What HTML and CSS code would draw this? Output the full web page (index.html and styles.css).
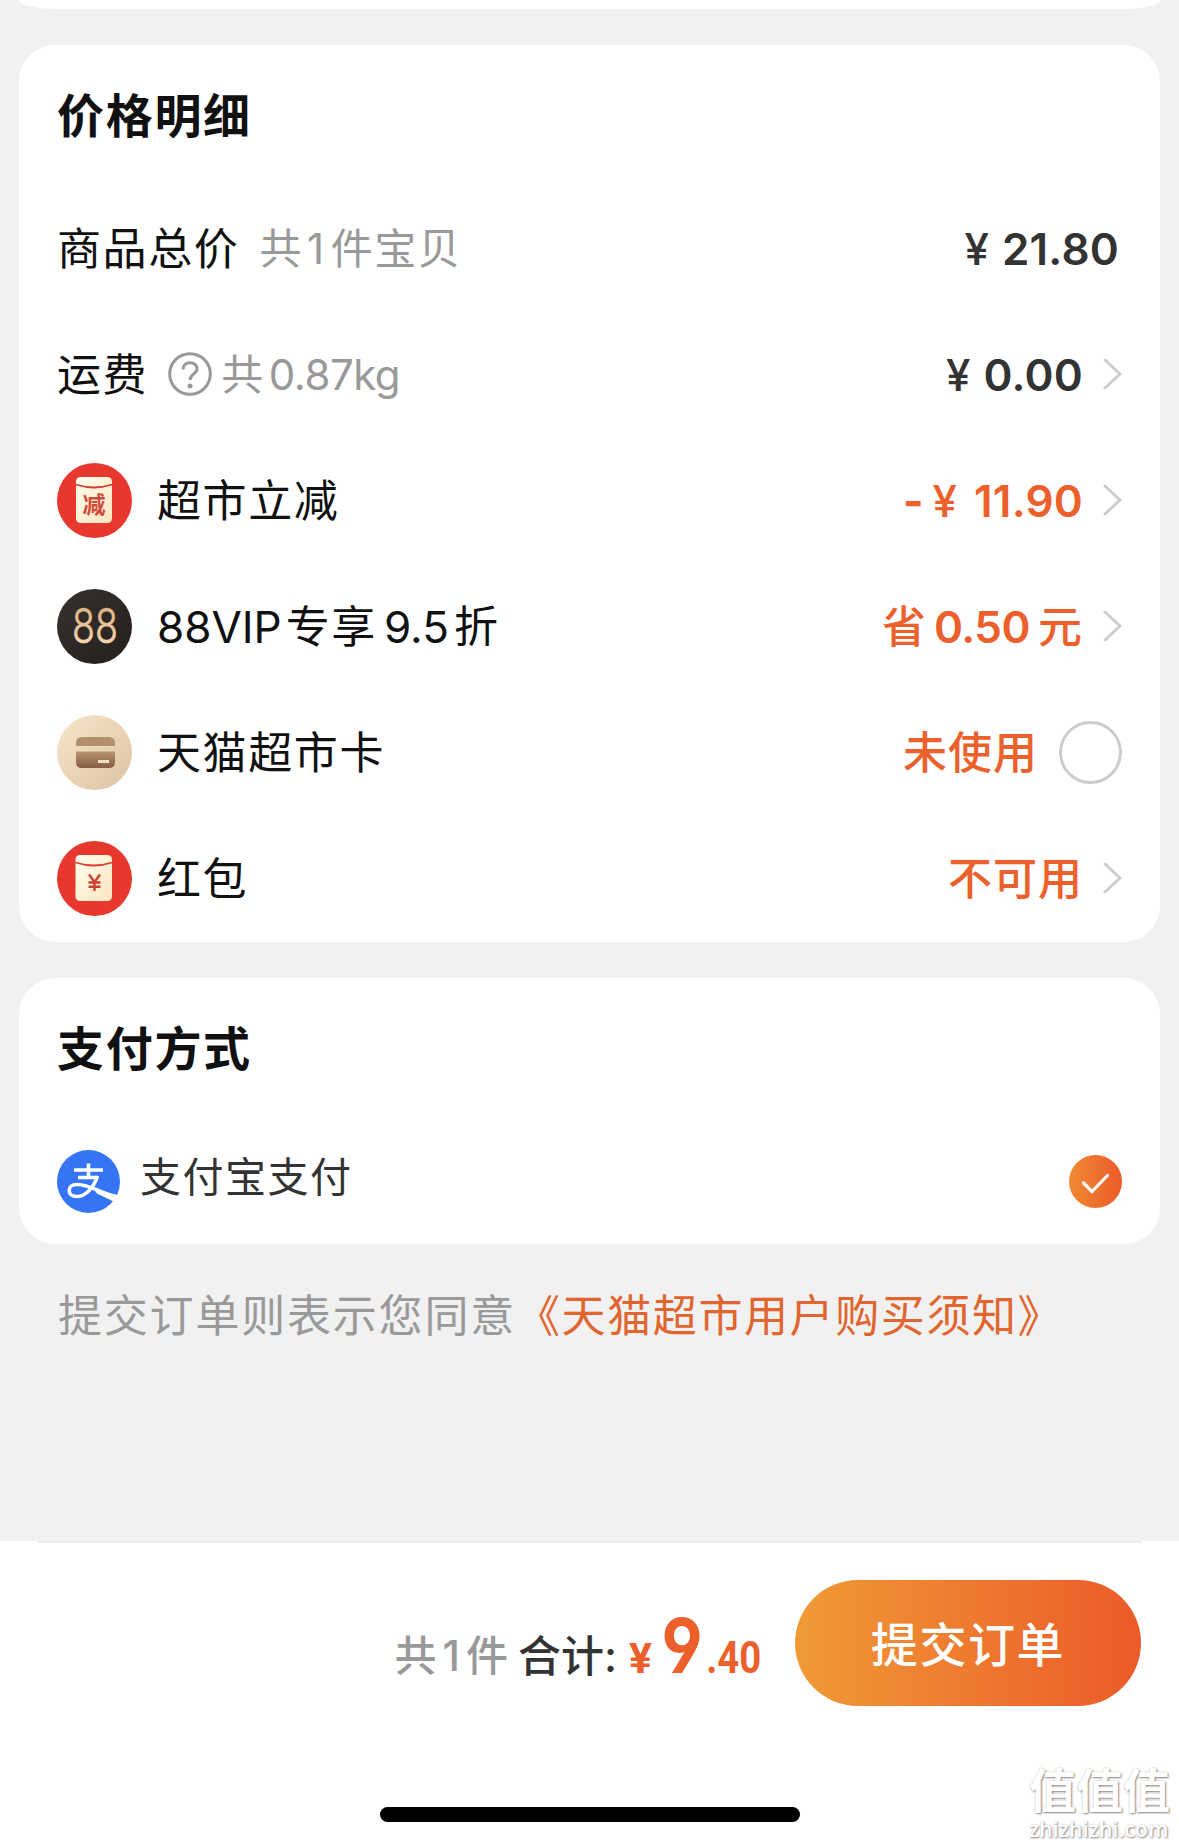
FILE: index.html
```html
<!DOCTYPE html>
<html lang="zh-CN">
<head>
<meta charset="utf-8">
<title>确认订单</title>
<link rel="stylesheet" href="styles.css">
</head>
<body>
<svg class="defs" width="0" height="0" aria-hidden="true">
  <defs>
    <linearGradient id="cream" x1="0" y1="0" x2="1" y2="1"><stop offset="0" stop-color="#fffdf0"/><stop offset="1" stop-color="#fbe6bd"/></linearGradient>
    <linearGradient id="sand" x1="0" y1="0" x2="1" y2="1"><stop offset="0" stop-color="#f9e6cb"/><stop offset="1" stop-color="#dcc3a1"/></linearGradient>
    <linearGradient id="brown" x1="0" y1="0" x2="0" y2="1"><stop offset="0" stop-color="#b9946f"/><stop offset="1" stop-color="#855c43"/></linearGradient>
    <linearGradient id="gold" x1="0" y1="0" x2="0" y2="1"><stop offset="0" stop-color="#d9a877"/><stop offset="1" stop-color="#f8dfb8"/></linearGradient>
    <linearGradient id="ink" x1="0" y1="0" x2="1" y2="1"><stop offset="0" stop-color="#37322f"/><stop offset="1" stop-color="#241f1c"/></linearGradient>
    <linearGradient id="orange" x1="0" y1="0" x2="1" y2="0"><stop offset="0" stop-color="#ef8a32"/><stop offset="1" stop-color="#ec5a29"/></linearGradient>
  </defs>
</svg>
<div class="page">
  <section class="card card-prev"></section>

  <section class="card card-price">
    <h2 class="title">价格明细</h2>
    <div class="row">
      <span class="label">商品总价</span><span class="note note-count">共<span class="one">1</span>件宝贝</span>
      <span class="value value-flat"><span class="yen">¥</span><span class="digits">21.80</span></span>
    </div>
    <div class="row">
      <span class="label">运费</span>
      <svg class="help" viewBox="0 0 44 44"><circle cx="22" cy="22" r="20.3"/><path d="M15 17.500C15 8.500 29 8.500 29 17C29 22 22 22 22 28"/><circle class="dot" cx="22" cy="34" r="2.500"/></svg>
      <span class="note note-weight">共<span class="kg">0.87kg</span></span>
      <span class="value"><span class="yen">¥</span><span class="digits">0.00</span></span>
      <svg class="chevron" viewBox="0 0 19 32"><path d="M2 2L17 16L2 30"/></svg>
    </div>
    <div class="row">
      <svg class="icon" viewBox="0 0 75 75"><circle cx="37.500" cy="37.500" r="37.500" fill="#e8382d"/><rect x="19" y="14" width="36" height="46" rx="4.500" fill="url(#cream)"/><path d="M19 21.500Q37 27.500 55 21.500" fill="none" stroke="#d93b2e" stroke-width="1.800"/><text class="icon-char" x="37" y="49.500">减</text></svg>
      <span class="label">超市立减</span>
      <span class="value accent"><span class="minus">-</span><span class="yen yen-off">¥</span><span class="digits">11.90</span></span>
      <svg class="chevron" viewBox="0 0 19 32"><path d="M2 2L17 16L2 30"/></svg>
    </div>
    <div class="row">
      <svg class="icon" viewBox="0 0 75 75"><circle cx="37.500" cy="37.500" r="37.500" fill="url(#ink)"/><text class="icon-vip" x="15" y="54" textLength="46" lengthAdjust="spacingAndGlyphs">88</text></svg>
      <span class="label"><span class="lat">88VIP</span>专享<span class="lat lat-mid">9.5</span>折</span>
      <span class="value accent">省<span class="digits amount">0.50</span>元</span>
      <svg class="chevron" viewBox="0 0 19 32"><path d="M2 2L17 16L2 30"/></svg>
    </div>
    <div class="row">
      <svg class="icon" viewBox="0 0 75 75"><circle cx="37.500" cy="37.500" r="37.500" fill="url(#sand)"/><path d="M19 31V28Q19 22 25 22H52Q58 22 58 28V31Z" fill="#b3906d"/><path d="M19 36.500H58V47Q58 53 52 53H25Q19 53 19 47Z" fill="url(#brown)"/><rect x="41" y="45" width="11" height="3" fill="#f3dfc2"/></svg>
      <span class="label">天猫超市卡</span>
      <span class="value value-radio accent">未使用</span>
      <span class="radio"></span>
    </div>
    <div class="row">
      <svg class="icon" viewBox="0 0 75 75"><circle cx="37.500" cy="37.500" r="37.500" fill="#e8382d"/><rect x="18.500" y="14" width="36.500" height="46" rx="4.500" fill="url(#cream)"/><path d="M18.500 21.500Q37 27.500 55 21.500" fill="none" stroke="#d93b2e" stroke-width="1.800"/><path d="M32 33.500L37.500 41L43 33.500M37.500 41V50M31.500 41.500H43.500M31.500 45.800H43.500" fill="none" stroke="#cf3f30" stroke-width="2.400"/></svg>
      <span class="label">红包</span>
      <span class="value accent">不可用</span>
      <svg class="chevron" viewBox="0 0 19 32"><path d="M2 2L17 16L2 30"/></svg>
    </div>
  </section>

  <section class="card card-pay">
    <h2 class="title">支付方式</h2>
    <div class="pay">
      <svg class="alipay" viewBox="0 0 63 63"><circle cx="31.500" cy="31.500" r="31.500" fill="#3575f5"/><path d="M17 20H46M31.500 13.500V28M21 27.500H41" fill="none" stroke="#fff" stroke-width="3.600"/><path d="M40.500 26C37 37 29 46.500 20 46.500C9.500 46.500 9.500 34.500 20 34.500C31 34.500 40 40.500 50 44" fill="none" stroke="#fff" stroke-width="3.600"/><path d="M36 38L62 45.500L57.500 52L40 43.500Z" fill="#fff"/></svg>
      <span class="pay-name">支付宝支付</span>
      <svg class="checked" viewBox="0 0 53 53"><circle cx="26.500" cy="26.500" r="26.500" fill="url(#orange)"/><path d="M14.500 28L23 36.500L38.500 20.500" fill="none" stroke="#fff" stroke-width="3.200" stroke-linecap="round" stroke-linejoin="round"/></svg>
    </div>
  </section>

  <p class="terms">提交订单则表示您同意<a class="terms-link">《天猫超市用户购买须知》</a></p>

  <footer class="bar">
    <div class="checkout">
      <span class="count">共<span class="one-bar">1</span>件</span>
      <span class="sum">合计<span class="colon">:</span></span>
      <span class="price"><span class="price-yen">¥</span><span class="price-int">9</span><span class="price-dec">.40</span></span>
      <button class="submit">提交订单</button>
    </div>
    <div class="home"></div>
    <div class="mark"><span class="mark-name">值值值</span><span class="mark-url">zhizhizhi.com</span></div>
  </footer>
</div>
</body>
</html>
```
FILE: styles.css
```css
* { box-sizing: border-box; }
body {
  margin: 0;
  background: #f1f1f1;
  font-family: Inter, "Noto Sans CJK SC", sans-serif;
  color: #111;
}
.defs { position: absolute; }
.page {
  width: 1179px;
  height: 1846px;
  display: flex;
  flex-direction: column;
  overflow: hidden;
  white-space: nowrap;
}
.card {
  margin: 0 19px 36px;
  padding: 0 38px;
  background: #fff;
  border-radius: 36px;
  flex: none;
}
.card-prev { height: 9px; border-radius: 0 0 36px 36px / 0 0 9px 9px; }
.card-price { height: 897px; padding-top: 32px; }
.card-pay { height: 266px; padding-top: 32px; margin-bottom: 0; }
.title {
  margin: 0;
  height: 78px;
  line-height: 78px;
  font-size: 47px;
  font-weight: 700;
  letter-spacing: 1.7px;
}
.card-price .title { margin-bottom: 30px; }
.row { height: 126px; display: flex; align-items: center; }
.label { font-size: 44px; letter-spacing: 1.6px; line-height: 64px; padding-top: 2px; }
.icon { width: 75px; height: 75px; margin-right: 25px; flex: none; }
.icon-char { font: 700 23px "Noto Sans CJK SC", sans-serif; fill: #d04a3a; text-anchor: middle; }
.icon-vip { font: 300 48px Inter, sans-serif; fill: url(#gold); stroke: url(#gold); stroke-width: .6; }
.note { font-size: 42px; letter-spacing: 1.6px; color: #999; line-height: 64px; padding-top: 2px; }
.note-count { margin-left: 20px; }
.one { margin: 0 5px 0 4px; }
.help { width: 44px; height: 44px; margin: 0 9px 0 20px; fill: none; stroke: #999; stroke-width: 3; }
.help .dot { fill: #999; stroke: none; }
.kg { margin-left: 4px; letter-spacing: -.5px; }
.value {
  margin-left: auto;
  margin-right: 20px;
  padding-top: 2px;
  font-size: 44px;
  font-weight: 500;
  letter-spacing: 1px;
  line-height: 64px;
  color: #333;
}
.value-flat { margin-right: 3px; }
.value-radio { margin-right: 21px; }
.accent { color: #ec602b; }
.digits { font-weight: 600; letter-spacing: .2px; }
.yen { margin-right: 12px; }
.yen-off { margin-right: 16px; }
.minus { margin-right: 8px; font-weight: 700; }
.amount { margin: 0 8px 0 7px; letter-spacing: -.5px; }
.chevron { width: 19px; height: 32px; fill: none; stroke: #ccc; stroke-width: 3; stroke-linecap: round; stroke-linejoin: round; }
.radio { width: 63px; height: 63px; border: 3px solid #ccc; border-radius: 50%; }
.chevron, .radio { flex: none; }
.lat { letter-spacing: 0; margin-right: 4px; }
.lat-mid { margin: 0 5px 0 7px; }
.pay { display: flex; align-items: center; height: 126px; padding-top: 20px; margin-top: 20px; }
.alipay { width: 63px; height: 63px; }
.pay-name { margin: -14px 0 0 20px; font-size: 41px; letter-spacing: 1.5px; color: #333; }
.checked { width: 53px; height: 53px; margin-left: auto; }
.terms { margin: 40px 0 0 58px; font-size: 44px; line-height: 64px; letter-spacing: 1.8px; color: #999; }
.terms-link { color: #e0652f; letter-spacing: 1.6px; }
.bar { position: relative; margin-top: auto; height: 305px; background: #fff; flex: none; }
.bar::before { content: ""; display: block; height: 2px; margin: 0 37px; background: #eee; }
.checkout { display: flex; align-items: center; justify-content: flex-end; margin-top: 37px; padding-right: 38px; height: 126px; font-weight: 500; line-height: 80px; }
.count, .sum { padding-top: 26px; }
.count { font-size: 42px; color: #999; margin-right: 10px; }
.one-bar { margin: 0 6px; }
.sum { font-size: 43px; color: #333; margin-right: 12px; }
.price { display: flex; align-items: baseline; padding-top: 17px; color: #ec602b; font-weight: 700; font-family: Roboto, sans-serif; margin-right: 34px; }
.price-yen { font-size: 43px; margin-right: 4px; }
.price-int { font-size: 76px; font-family: Inter, sans-serif; font-feature-settings: "cv04"; transform: scaleX(.88); transform-origin: right; }
.price-dec { font-size: 44px; margin-left: -5px; transform: scaleX(.87); transform-origin: right; }
.submit {
  width: 346px;
  height: 126px;
  padding: 0 0 3px;
  border: 0;
  border-radius: 63px;
  background: linear-gradient(90deg, #f09a35, #ec5a29);
  color: #fff;
  font: 500 47px/123px "Noto Sans CJK SC", sans-serif;
  letter-spacing: 1.6px;
}
.home { width: 420px; height: 15px; margin: 101px auto 0; border-radius: 8px; background: #000; }
.mark {
  position: absolute;
  right: 9px;
  bottom: 5px;
  display: flex;
  flex-direction: column;
  gap: 2px;
  color: #fff;
  text-shadow: 1px 1px 2px #888, 0 0 2px #ccc;
}
.mark-name { font: 700 47px/54px "Noto Sans CJK SC", sans-serif; }
.mark-url { font: 600 21px/24px "Open Sans", sans-serif; letter-spacing: .2px; }
```
